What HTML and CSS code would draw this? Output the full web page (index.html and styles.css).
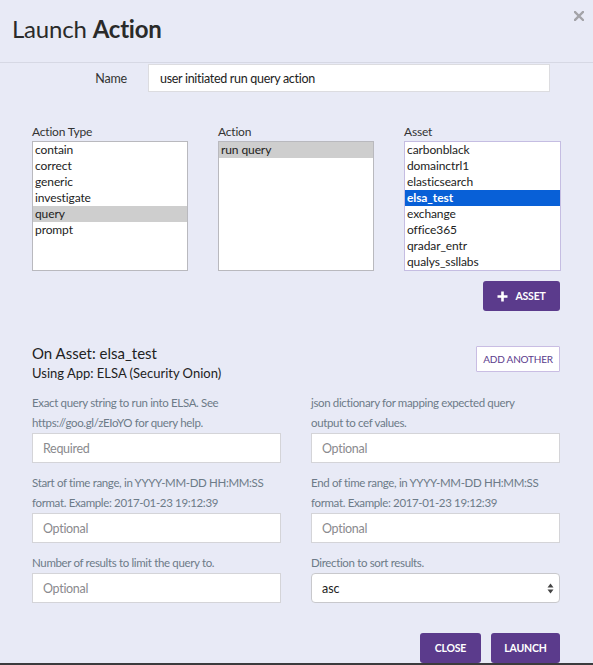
FILE: index.html
```html
<!DOCTYPE html>
<html lang="en">
<head>
<meta charset="utf-8">
<title>Launch Action</title>
<link rel="stylesheet" href="styles.css">
</head>
<body>
<div class="modal">
  <header class="modal-header">
    <h1 class="title">Launch <b>Action</b></h1>
    <svg class="close-x" width="10" height="10" viewBox="0 0 10 10"><path d="M1 1L9 9M9 1L1 9" stroke="#a3a3a8" stroke-width="2.4" stroke-linecap="square"/></svg>
  </header>

  <div class="name-row">
    <label class="name-label">Name</label>
    <div class="text-input name-input">user initiated run query action</div>
  </div>

  <div class="lists">
    <div class="list-col">
      <div class="list-label">Action Type</div>
      <div class="listbox">
        <div class="opt">contain</div>
        <div class="opt">correct</div>
        <div class="opt">generic</div>
        <div class="opt">investigate</div>
        <div class="opt sel-gray">query</div>
        <div class="opt">prompt</div>
      </div>
    </div>
    <div class="list-col">
      <div class="list-label">Action</div>
      <div class="listbox">
        <div class="opt sel-gray">run query</div>
      </div>
    </div>
    <div class="list-col">
      <div class="list-label">Asset</div>
      <div class="listbox focused">
        <div class="opt">carbonblack</div>
        <div class="opt">domainctrl1</div>
        <div class="opt">elasticsearch</div>
        <div class="opt sel-blue">elsa_test</div>
        <div class="opt">exchange</div>
        <div class="opt">office365</div>
        <div class="opt">qradar_entr</div>
        <div class="opt">qualys_ssllabs</div>
      </div>
    </div>
  </div>

  <div class="asset-row">
    <button class="btn btn-purple btn-asset"><svg width="11" height="11" viewBox="0 0 11 11"><path d="M5.5 0.5V10.5M0.5 5.5H10.5" stroke="#fff" stroke-width="2.6"/></svg>ASSET</button>
  </div>

  <div class="on-asset">
    <div class="on-asset-text">
      <div class="on-asset-title">On Asset: elsa_test</div>
      <div class="on-asset-app">Using App: ELSA (Security Onion)</div>
    </div>
    <button class="btn btn-outline">ADD ANOTHER</button>
  </div>

  <div class="params">
    <div class="field">
      <div class="field-label">Exact query string to run into ELSA. See<br>https://goo.gl/zEIoYO for query help.</div>
      <div class="text-input field-input placeholder">Required</div>
    </div>
    <div class="field">
      <div class="field-label">json dictionary for mapping expected query<br>output to cef values.</div>
      <div class="text-input field-input placeholder">Optional</div>
    </div>
    <div class="field">
      <div class="field-label">Start of time range, in YYYY-MM-DD HH:MM:SS<br>format. Example: 2017-01-23 19:12:39</div>
      <div class="text-input field-input placeholder">Optional</div>
    </div>
    <div class="field">
      <div class="field-label">End of time range, in YYYY-MM-DD HH:MM:SS<br>format. Example: 2017-01-23 19:12:39</div>
      <div class="text-input field-input placeholder">Optional</div>
    </div>
    <div class="field">
      <div class="field-label">Number of results to limit the query to.</div>
      <div class="text-input field-input placeholder">Optional</div>
    </div>
    <div class="field">
      <div class="field-label">Direction to sort results.</div>
      <div class="select-box">
        <span>asc</span>
        <svg width="7" height="11" viewBox="0 0 7 11"><path d="M3.5 0.5L6.5 4.5H0.5Z M3.5 10.5L6.5 6.5H0.5Z" fill="#444"/></svg>
      </div>
    </div>
  </div>

  <div class="footer">
    <button class="btn btn-purple btn-close">CLOSE</button>
    <button class="btn btn-purple btn-launch">LAUNCH</button>
  </div>
  <div class="bottom-bar"></div>
</div>
</body>
</html>
```
FILE: styles.css
```css
* { box-sizing: border-box; }
html, body {
  margin: 0;
  padding: 0;
  background: #e8eaf6;
  font-family: Lato, "Open Sans", sans-serif;
  color: #222;
  overflow: hidden;
}
.modal {
  width: 593px;
  height: 665px;
  background: #e8eaf6;
}
.modal-header {
  height: 63px;
  border-bottom: 1px solid #d6d8e4;
  display: flex;
  justify-content: space-between;
  align-items: flex-start;
  padding: 14px 9px 0 12px;
}
.title {
  margin: 0;
  font-size: 24px;
  line-height: 30px;
  font-weight: 400;
  color: #2a2a2a;
  letter-spacing: -0.2px;
}
.title b { font-weight: 700; }
.close-x { margin-top: -3px; }

.name-row {
  display: flex;
  align-items: center;
  margin-top: 1px;
}
.name-label {
  width: 127px;
  text-align: right;
  font-size: 12.5px;
  letter-spacing: -0.2px;
  color: #333;
}
.text-input {
  background: #fff;
  border: 1px solid #d4d4d8;
  display: flex;
  align-items: center;
  font-size: 12.5px;
  letter-spacing: -0.3px;
  white-space: nowrap;
}
.name-input {
  margin-left: 21px;
  width: 402px;
  height: 28px;
  padding-left: 11px;
  color: #222;
  border-color: #dcdce0;
}

.lists {
  display: grid;
  grid-template-columns: 156px 156px 157px;
  column-gap: 30px;
  margin: 32px 0 0 32px;
  width: 529px;
}
.list-label {
  font-size: 12px;
  line-height: 16px;
  height: 17px;
  color: #333;
  letter-spacing: -0.2px;
}
.listbox {
  height: 130px;
  background: #fff;
  border: 1px solid #b9b9be;
}
.listbox.focused { border-color: #c5bde2; }
.opt {
  height: 16px;
  line-height: 16px;
  font-size: 12px;
  padding-left: 2px;
  color: #222;
  white-space: nowrap;
  letter-spacing: -0.1px;
}
.sel-gray { background: #cecece; }
.sel-blue { background: #0860d7; color: #fff; font-weight: 700; }

.asset-row {
  display: flex;
  justify-content: flex-end;
  padding-right: 33px;
  margin-top: 10px;
}
.btn {
  font-family: Lato, "Open Sans", sans-serif;
  font-size: 10.5px;
  font-weight: 700;
  border-radius: 3px;
  cursor: pointer;
  padding: 0;
  display: inline-flex;
  align-items: center;
  justify-content: center;
  letter-spacing: -0.2px;
}
.btn-purple {
  background: #5b3b8c;
  color: #fff;
  border: none;
  height: 30px;
}
.btn-asset {
  width: 77px;
  gap: 7px;
}
.on-asset {
  display: flex;
  justify-content: space-between;
  align-items: flex-start;
  margin: 32px 33px 0 32px;
}
.on-asset-title {
  font-size: 15px;
  line-height: 20px;
  color: #222;
}
.on-asset-app {
  font-size: 13px;
  line-height: 20px;
  color: #222;
}
.btn-outline {
  margin-top: 3px;
  width: 84px;
  height: 26px;
  background: #fff;
  color: #5b3b8c;
  border: 1px solid #c9bde3;
  border-radius: 1px;
  font-weight: 400;
  font-size: 10px;
  letter-spacing: -0.2px;
}

.params {
  display: grid;
  grid-template-columns: 249px 249px;
  column-gap: 30px;
  row-gap: 10px;
  margin: 10px 0 0 32px;
}
.field { display: flex; flex-direction: column; justify-content: flex-end; }
.field-label {
  font-size: 11.5px;
  line-height: 20px;
  letter-spacing: -0.35px;
  color: #6d7b88;
  white-space: nowrap;
}
.field-input {
  height: 30px;
  padding-left: 10px;
}
.placeholder { color: #8a8a8e; }
.select-box {
  height: 30px;
  background: #fff;
  border: 1px solid #c8c8cc;
  border-radius: 4px;
  display: flex;
  align-items: center;
  justify-content: space-between;
  padding: 0 5px 0 10px;
  font-size: 12.5px;
  color: #222;
}

.footer {
  display: flex;
  justify-content: flex-end;
  gap: 10px;
  margin-top: 30px;
  padding-right: 33px;
}
.btn-close { width: 61px; }
.btn-launch { width: 69px; }
.bottom-bar {
  height: 10px;
  background: #3b3b3d;
}
```
